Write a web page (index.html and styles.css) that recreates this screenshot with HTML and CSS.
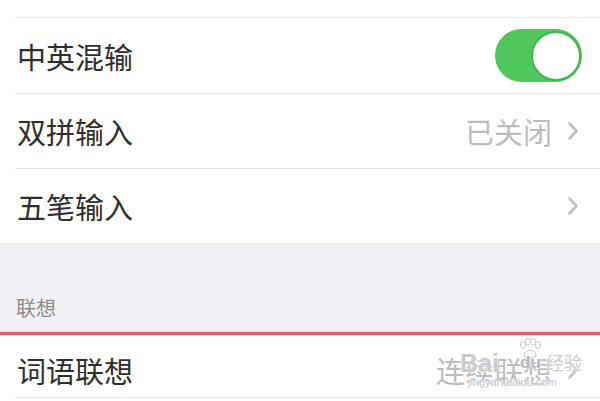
FILE: index.html
```html
<!DOCTYPE html>
<html lang="zh-CN">
<head>
    <meta charset="UTF-8">
    <meta name="viewport" content="width=device-width, initial-scale=1.0">
    <title>输入法设置</title>
    <link rel="stylesheet" href="styles.css">
</head>
<body>
    <div class="list">
        <div class="row row-cut"></div>
        <div class="row row-first">
            <span class="label">中英混输</span>
            <span class="switch on"><span class="knob"></span></span>
        </div>
        <div class="row">
            <span class="label">双拼输入</span>
            <span class="value">已关闭</span>
            <svg class="chevron" width="10" height="18" viewBox="0 0 10 18"><polyline points="1.5,1.5 8.5,9 1.5,16.5"/></svg>
        </div>
        <div class="row last">
            <span class="label">五笔输入</span>
            <svg class="chevron" width="10" height="18" viewBox="0 0 10 18"><polyline points="1.5,1.5 8.5,9 1.5,16.5"/></svg>
        </div>
    </div>

    <div class="section-head">联想</div>
    <div class="divider"></div>

    <div class="list">
        <div class="row row-bottom">
            <span class="label">词语联想</span>
            <span class="value">连续联想</span>
            <svg class="chevron" width="10" height="18" viewBox="0 0 10 18"><polyline points="1.5,1.5 8.5,9 1.5,16.5"/></svg>
            <div class="watermark">
                <svg class="paw" width="26" height="22" viewBox="0 0 26 22">
                    <ellipse cx="6" cy="7" rx="2.6" ry="3.4"/>
                    <ellipse cx="11" cy="3.5" rx="2.6" ry="3.2"/>
                    <ellipse cx="16" cy="3.5" rx="2.6" ry="3.2"/>
                    <ellipse cx="21" cy="7" rx="2.6" ry="3.4"/>
                    <path d="M7 17 C7 11 19 11 19 17 C19 21 7 21 7 17 Z"/>
                </svg>
                <span class="wm-bai">Bai</span><span class="wm-du">du</span><span class="wm-jy">经验</span>
                <span class="wm-url">jingyan.baidu.com</span>
            </div>
        </div>
    </div>
</body>
</html>
```

FILE: styles.css
```css
body {
    margin: 0;
    background: #ffffff;
    font-family: "Noto Sans CJK SC", "Noto Sans", sans-serif;
    color: #2e2e2e;
}
.list {
    background: #ffffff;
}
.row {
    display: flex;
    align-items: center;
    height: 74px;
    margin-left: 15px;
    padding-left: 2px;
    padding-right: 22px;
    border-bottom: 1px solid #e6e6e8;
    position: relative;
}
.row-cut {
    height: 17px;
}
.row-first {
    height: 75px;
    padding-right: 18px;
}
.row.last {
    border-bottom: none;
}
.row-bottom {
    box-sizing: border-box;
    height: 62px;
    padding-top: 6px;
    border-bottom-color: #f1eaea;
}
.label {
    font-size: 29px;
    flex: 1;
}
.value {
    font-size: 29px;
    color: #bdbdbd;
    margin-right: 16px;
}
.chevron polyline {
    fill: none;
    stroke: #c0c0c4;
    stroke-width: 2.6;
    stroke-linecap: round;
    stroke-linejoin: round;
}
.switch {
    width: 87px;
    height: 53px;
    border-radius: 27px;
    background: #4fc75c;
    display: flex;
    justify-content: flex-end;
    align-items: center;
    box-sizing: border-box;
    padding: 1px;
}
.knob {
    width: 50px;
    height: 50px;
    border-radius: 50%;
    background: #ffffff;
    border: 2px solid #43b54f;
    box-sizing: border-box;
}
.section-head {
    background: #f0f0f5;
    height: 89px;
    box-sizing: border-box;
    padding: 50px 0 0 16px;
    font-size: 20px;
    color: #8c8c90;
    border-bottom: 1px solid #f5d6d6;
}
.divider {
    height: 3px;
    background: #d6636e;
    border-bottom: 1px solid #f3d3d6;
}
.watermark {
    position: absolute;
    left: 445px;
    top: 2px;
    width: 130px;
    height: 56px;
    color: rgba(200, 200, 204, 0.95);
    font-family: "Liberation Sans", sans-serif;
    text-shadow: 0 0 2px #ffffff, 0 0 2px #ffffff;
}
.paw {
    position: absolute;
    left: 57px;
    top: 0;
    fill: #ffffff;
    stroke: #c8c8cc;
    stroke-width: 1;
}
.wm-bai {
    position: absolute;
    left: 0;
    top: 11px;
    font-size: 25px;
    font-weight: bold;
}
.wm-du {
    position: absolute;
    left: 60px;
    top: 15px;
    font-size: 17px;
    font-weight: bold;
    color: #b8b8bc;
}
.wm-jy {
    position: absolute;
    left: 86px;
    top: 11px;
    font-size: 18px;
    font-family: "Noto Sans CJK SC", sans-serif;
}
.wm-url {
    position: absolute;
    left: 8px;
    top: 38px;
    font-size: 11px;
    color: #c4c4c8;
}
```
